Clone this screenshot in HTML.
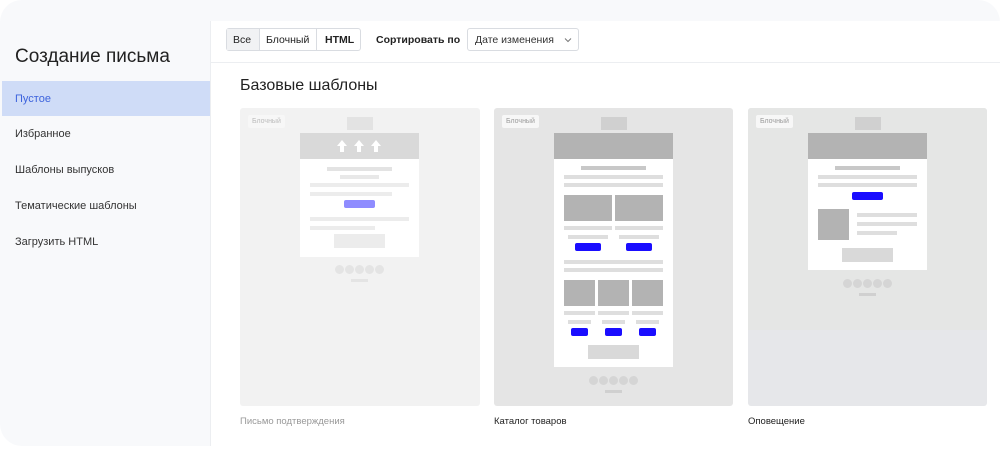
<!DOCTYPE html>
<html><head><meta charset="utf-8"><style>
*{margin:0;padding:0;box-sizing:border-box}
body{width:1000px;height:449px;background:#fff;font-family:"Liberation Sans",sans-serif;position:relative;overflow:hidden}
div,span{position:absolute}
.frame{left:0;top:0;width:1000px;height:446px;background:#f8f9fb;border-radius:22px}
.main{left:210px;top:21px;width:790px;height:425px;background:#fff;border-left:1px solid #eceef1}
.t{white-space:nowrap;color:#222}
.nav{left:15px;font-size:11px;color:#333}
.l{background:#dedede;height:4px}
.d{background:#c8c8c8;height:4px}
.g{background:#b3b3b3}
.b{background:#1a0dff;border-radius:2px;height:8px}
.dot{width:9px;height:9px;border-radius:50%;background:#d5d5d5}
.badge{font-size:7px;color:#999;background:#f7f7f7;padding:3px 4px;border-radius:2px}
</style></head><body>
<div class="frame"></div>
<div class="main"></div>
<span class="t" style="left:15px;top:46px;font-size:19px;color:#222">Создание письма</span>
<div style="left:2px;top:81px;width:208px;height:35px;background:#cfdcf7"></div>
<span class="t nav" style="top:93px;color:#3d63dd">Пустое</span>
<span class="t nav" style="top:128px">Избранное</span>
<span class="t nav" style="top:164px">Шаблоны выпусков</span>
<span class="t nav" style="top:200px">Тематические шаблоны</span>
<span class="t nav" style="top:236px">Загрузить HTML</span>

<div style="left:226px;top:28px;width:135px;height:23px;border:1px solid #d9dce1;border-radius:3px"></div>
<div style="left:227px;top:29px;width:32px;height:21px;background:#f1f2f4"></div>
<div style="left:259px;top:29px;width:1px;height:21px;background:#d9dce1"></div>
<div style="left:316px;top:29px;width:1px;height:21px;background:#d9dce1"></div>
<span class="t" style="left:233px;top:34px;font-size:10.5px">Все</span>
<span class="t" style="left:266px;top:34px;font-size:10.5px">Блочный</span>
<span class="t" style="left:325px;top:34px;font-size:10.5px;font-weight:bold">HTML</span>
<span class="t" style="left:376px;top:34px;font-size:10.5px;font-weight:bold">Сортировать по</span>
<div style="left:467px;top:28px;width:112px;height:23px;border:1px solid #d9dce1;border-radius:3px"></div>
<span class="t" style="left:475px;top:34px;font-size:10.5px;color:#333">Дате изменения</span>
<svg style="position:absolute;left:564px;top:37px" width="8" height="6"><path d="M1 1.5L4 4.5L7 1.5" stroke="#777" fill="none"/></svg>
<div style="left:211px;top:62px;width:789px;height:1px;background:#eceef1"></div>
<span class="t" style="left:240px;top:77px;font-size:16px">Базовые шаблоны</span>

<!-- card1 -->
<div style="left:240px;top:108px;width:240px;height:298px;background:#f2f2f2;border-radius:3px"></div>
<span class="badge" style="left:248px;top:115px;color:#bbb">Блочный</span>
<div style="left:347px;top:117px;width:26px;height:13px;background:#e3e3e3"></div>
<div style="left:300px;top:133px;width:119px;height:124px;background:#fff"></div>
<div style="left:300px;top:133px;width:119px;height:26px;background:#d9d9d9"></div>
<svg style="position:absolute;left:336px;top:140px" width="48" height="13" fill="#fff"><path d="M6 0L11 6H8V12H4V6H1Z"/><path d="M23 0L28 6H25V12H21V6H18Z"/><path d="M40 0L45 6H42V12H38V6H35Z"/></svg>
<div class="l" style="left:327px;top:167px;width:65px;background:#e3e3e3"></div>
<div class="l" style="left:340px;top:175px;width:39px;background:#e8e8e8"></div>
<div class="l" style="left:310px;top:183px;width:99px;background:#ececec"></div>
<div class="l" style="left:310px;top:192px;width:82px;background:#ececec"></div>
<div class="b" style="left:344px;top:200px;width:31px;background:#8f8cff"></div>
<div class="l" style="left:310px;top:217px;width:99px;background:#ececec"></div>
<div class="l" style="left:310px;top:226px;width:65px;background:#ececec"></div>
<div style="left:334px;top:234px;width:51px;height:14px;background:#ececec"></div>
<div class="dot" style="left:335px;top:265px;background:#e4e4e4"></div><div class="dot" style="left:345px;top:265px;background:#e4e4e4"></div><div class="dot" style="left:355px;top:265px;background:#e4e4e4"></div><div class="dot" style="left:365px;top:265px;background:#e4e4e4"></div><div class="dot" style="left:375px;top:265px;background:#e4e4e4"></div>
<div style="left:351px;top:279px;width:17px;height:3px;background:#e4e4e4"></div>
<span class="t" style="left:240px;top:416px;font-size:9.5px;color:#999">Письмо подтверждения</span>

<!-- card2 -->
<div style="left:494px;top:108px;width:239px;height:298px;background:#e5e5e5;border-radius:3px"></div>
<span class="badge" style="left:502px;top:115px">Блочный</span>
<div style="left:601px;top:117px;width:26px;height:13px;background:#d0d0d0"></div>
<div style="left:554px;top:133px;width:119px;height:234px;background:#fff"></div>
<div class="g" style="left:554px;top:133px;width:119px;height:26px"></div>
<div class="d" style="left:581px;top:166px;width:65px"></div>
<div class="l" style="left:564px;top:175px;width:99px"></div>
<div class="l" style="left:564px;top:183px;width:99px"></div>
<div class="g" style="left:564px;top:195px;width:48px;height:26px"></div>
<div class="g" style="left:615px;top:195px;width:48px;height:26px"></div>
<div class="l" style="left:564px;top:226px;width:48px"></div><div class="l" style="left:615px;top:226px;width:48px"></div>
<div class="l" style="left:568px;top:235px;width:40px"></div><div class="l" style="left:619px;top:235px;width:40px"></div>
<div class="b" style="left:575px;top:243px;width:26px"></div><div class="b" style="left:626px;top:243px;width:26px"></div>
<div class="l" style="left:564px;top:260px;width:99px"></div>
<div class="l" style="left:564px;top:268px;width:99px"></div>
<div class="g" style="left:564px;top:280px;width:31px;height:26px"></div>
<div class="g" style="left:598px;top:280px;width:31px;height:26px"></div>
<div class="g" style="left:632px;top:280px;width:31px;height:26px"></div>
<div class="l" style="left:564px;top:311px;width:31px"></div><div class="l" style="left:598px;top:311px;width:31px"></div><div class="l" style="left:632px;top:311px;width:31px"></div>
<div class="l" style="left:568px;top:320px;width:23px"></div><div class="l" style="left:602px;top:320px;width:23px"></div><div class="l" style="left:636px;top:320px;width:23px"></div>
<div class="b" style="left:571px;top:328px;width:17px"></div><div class="b" style="left:605px;top:328px;width:17px"></div><div class="b" style="left:639px;top:328px;width:17px"></div>
<div style="left:588px;top:345px;width:51px;height:14px;background:#d9d9d9"></div>
<div class="dot" style="left:589px;top:376px"></div><div class="dot" style="left:599px;top:376px"></div><div class="dot" style="left:609px;top:376px"></div><div class="dot" style="left:619px;top:376px"></div><div class="dot" style="left:629px;top:376px"></div>
<div style="left:605px;top:390px;width:17px;height:3px;background:#d0d0d0"></div>
<span class="t" style="left:494px;top:416px;font-size:9.5px;color:#222">Каталог товаров</span>

<!-- card3 -->
<div style="left:748px;top:108px;width:239px;height:298px;background:#e6e7ea;border-radius:3px"></div>
<div style="left:748px;top:108px;width:239px;height:222px;background:#e5e6e5;border-radius:3px 3px 0 0"></div>
<span class="badge" style="left:756px;top:115px">Блочный</span>
<div style="left:855px;top:117px;width:26px;height:13px;background:#d0d0d0"></div>
<div style="left:808px;top:133px;width:119px;height:137px;background:#fff"></div>
<div class="g" style="left:808px;top:133px;width:119px;height:26px"></div>
<div class="d" style="left:835px;top:166px;width:65px"></div>
<div class="l" style="left:818px;top:175px;width:99px"></div>
<div class="l" style="left:818px;top:183px;width:99px"></div>
<div class="b" style="left:852px;top:192px;width:31px"></div>
<div class="g" style="left:818px;top:209px;width:31px;height:31px"></div>
<div class="l" style="left:857px;top:213px;width:60px"></div>
<div class="l" style="left:857px;top:222px;width:60px"></div>
<div class="l" style="left:857px;top:231px;width:40px"></div>
<div style="left:842px;top:248px;width:51px;height:14px;background:#d9d9d9"></div>
<div class="dot" style="left:843px;top:279px"></div><div class="dot" style="left:853px;top:279px"></div><div class="dot" style="left:863px;top:279px"></div><div class="dot" style="left:873px;top:279px"></div><div class="dot" style="left:883px;top:279px"></div>
<div style="left:859px;top:293px;width:17px;height:3px;background:#d0d0d0"></div>
<span class="t" style="left:748px;top:416px;font-size:9.5px;color:#222">Оповещение</span>
</body></html>
